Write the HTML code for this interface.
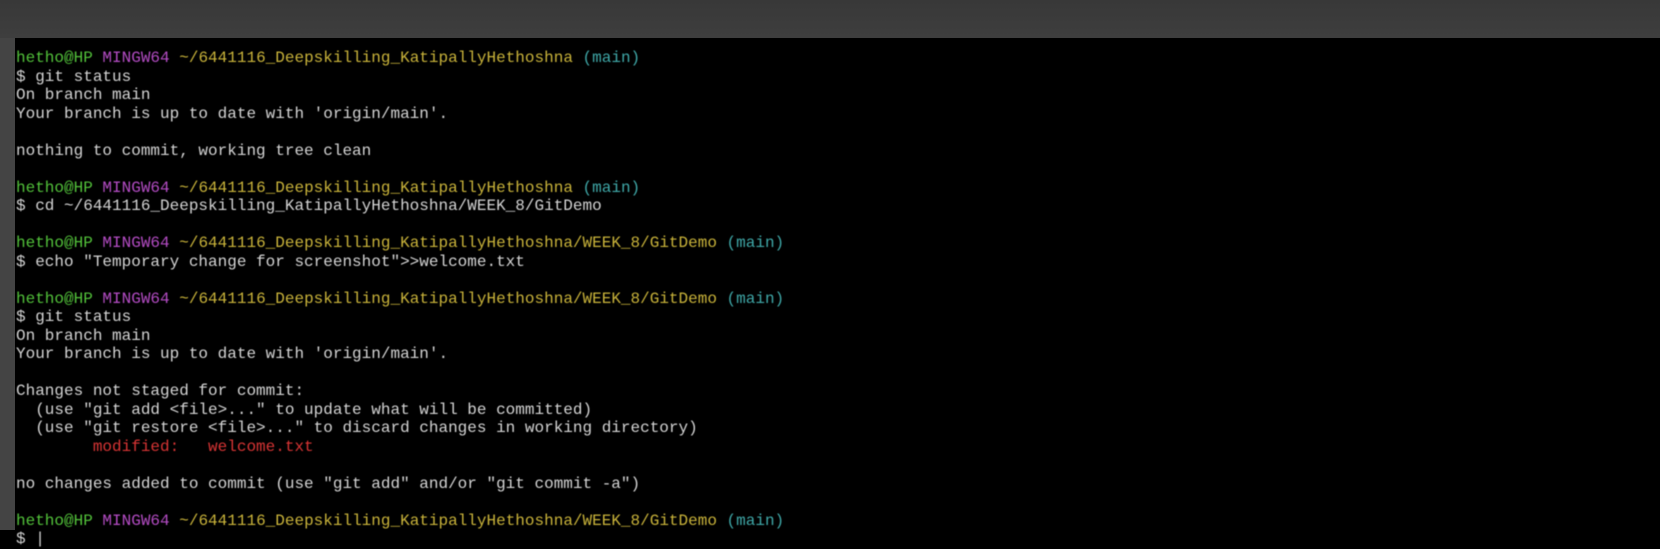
<!DOCTYPE html>
<html><head><meta charset="utf-8"><style>
html,body{margin:0;padding:0;width:1660px;height:530px;overflow:hidden;background:#000}
#top{position:absolute;left:0;top:0;width:1660px;height:38px;background:linear-gradient(180deg,#383838,#3e3e3e)}
#left{position:absolute;left:0;top:38px;width:15px;height:492px;background:#444}
#term{position:absolute;left:16px;top:49px;margin:0;font-family:"Liberation Mono","DejaVu Sans Mono",monospace;font-size:16px;line-height:18.5px;color:#d4d4d4;white-space:pre;filter:blur(0.4px)}
.g{color:#52c23a}.m{color:#b44cc4}.y{color:#c9b33a}.c{color:#3fa8a8}.r{color:#d83434}
</style></head><body>
<div id="top"></div><div id="left"></div>
<pre id="term"><span class="g">hetho@HP</span> <span class="m">MINGW64</span> <span class="y">~/6441116_Deepskilling_KatipallyHethoshna</span> <span class="c">(main)</span>
$ git status
On branch main
Your branch is up to date with 'origin/main'.

nothing to commit, working tree clean

<span class="g">hetho@HP</span> <span class="m">MINGW64</span> <span class="y">~/6441116_Deepskilling_KatipallyHethoshna</span> <span class="c">(main)</span>
$ cd ~/6441116_Deepskilling_KatipallyHethoshna/WEEK_8/GitDemo

<span class="g">hetho@HP</span> <span class="m">MINGW64</span> <span class="y">~/6441116_Deepskilling_KatipallyHethoshna/WEEK_8/GitDemo</span> <span class="c">(main)</span>
$ echo "Temporary change for screenshot"&gt;&gt;welcome.txt

<span class="g">hetho@HP</span> <span class="m">MINGW64</span> <span class="y">~/6441116_Deepskilling_KatipallyHethoshna/WEEK_8/GitDemo</span> <span class="c">(main)</span>
$ git status
On branch main
Your branch is up to date with 'origin/main'.

Changes not staged for commit:
  (use "git add &lt;file&gt;..." to update what will be committed)
  (use "git restore &lt;file&gt;..." to discard changes in working directory)
        <span class="r">modified:   welcome.txt</span>

no changes added to commit (use "git add" and/or "git commit -a")

<span class="g">hetho@HP</span> <span class="m">MINGW64</span> <span class="y">~/6441116_Deepskilling_KatipallyHethoshna/WEEK_8/GitDemo</span> <span class="c">(main)</span>
$ |</pre>
</body></html>
